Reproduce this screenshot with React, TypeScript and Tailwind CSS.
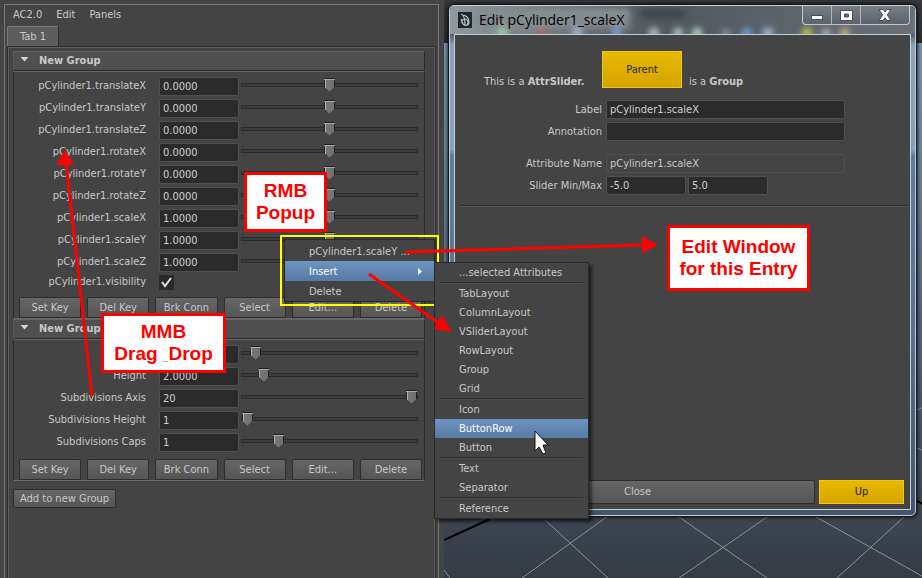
import { useState } from "react";
import clsx from "clsx";

type Attr = { name: string; value: string; slider: number };

const TRANSFORM_ATTRS: Attr[] = [
  { name: "pCylinder1.translateX", value: "0.0000", slider: 50 },
  { name: "pCylinder1.translateY", value: "0.0000", slider: 50 },
  { name: "pCylinder1.translateZ", value: "0.0000", slider: 50 },
  { name: "pCylinder1.rotateX", value: "0.0000", slider: 50 },
  { name: "pCylinder1.rotateY", value: "0.0000", slider: 50 },
  { name: "pCylinder1.rotateZ", value: "0.0000", slider: 50 },
  { name: "pCylinder1.scaleX", value: "1.0000", slider: 50 },
  { name: "pCylinder1.scaleY", value: "1.0000", slider: 50 },
  { name: "pCylinder1.scaleZ", value: "1.0000", slider: 50 },
];

const SHAPE_ATTRS: Attr[] = [
  { name: "", value: "", slider: 5 },
  { name: "Height", value: "2.0000", slider: 10 },
  { name: "Subdivisions Axis", value: "20", slider: 100 },
  { name: "Subdivisions Height", value: "1", slider: 0 },
  { name: "Subdivisions Caps", value: "1", slider: 19 },
];

const ROW_BUTTONS = ["Set Key", "Del Key", "Brk Conn", "Select", "Edit...", "Delete"];

const INSERT_MENU = [
  ["...selected Attributes"],
  ["TabLayout", "ColumnLayout", "VSliderLayout", "RowLayout", "Group", "Grid"],
  ["Icon", "ButtonRow", "Button"],
  ["Text", "Separator"],
  ["Reference"],
];

const FIELD =
  "h-[19px] rounded-xs border border-[#505050] bg-[#2b2b2b] px-[3px] text-[11px] text-[#d0d0d0] outline-none";
const BUTTON =
  "rounded-t-xs border border-[#2e2e2e] bg-linear-to-b from-[#666] to-[#555] text-center text-[#c8c8c8]";
const YELLOW_BUTTON =
  "border border-[#f3c70c] bg-linear-to-b from-[#e8b800] to-[#d4a500] text-[#222]";
const MENU_ITEM = "w-full pt-px pl-6 text-left";

function AttrSlider({ attr }: { attr: Attr }) {
  const [value, setValue] = useState(attr.value);
  const [slider, setSlider] = useState(attr.slider);
  const id = `attr-${attr.name}`;
  return (
    <div className="flex h-[22px] items-center">
      <label htmlFor={id} className="w-[132px] text-right">
        {attr.name}
      </label>
      <input
        id={id}
        value={value}
        onChange={(e) => setValue(e.target.value)}
        className={clsx(FIELD, "ml-[13px] w-20")}
      />
      <input
        type="range"
        aria-label={attr.name}
        value={slider}
        onChange={(e) => setSlider(Number(e.target.value))}
        className="mr-[6px] mb-[3px] ml-[2px] h-4 min-w-0 flex-1 appearance-none bg-transparent [&::-webkit-slider-runnable-track]:h-1 [&::-webkit-slider-runnable-track]:border [&::-webkit-slider-runnable-track]:border-[#2a2a2a] [&::-webkit-slider-runnable-track]:bg-[#3c3c3c] [&::-webkit-slider-thumb]:-mt-[6px] [&::-webkit-slider-thumb]:h-[14px] [&::-webkit-slider-thumb]:w-[11px] [&::-webkit-slider-thumb]:appearance-none [&::-webkit-slider-thumb]:bg-[linear-gradient(#222_1px,#aaa_1px,#aaa_2px,transparent_2px),linear-gradient(90deg,#222_1px,#b0b0b0_1px,#b0b0b0_2px,#777_2px,#707070_10px,#222_10px)] [&::-webkit-slider-thumb]:[clip-path:polygon(0_0,100%_0,100%_65%,50%_100%,0_65%)]"
      />
    </div>
  );
}

function Group({ attrs, visibility }: { attrs: Attr[]; visibility?: boolean }) {
  const [open, setOpen] = useState(true);
  return (
    <section>
      <h2>
        <button
          type="button"
          onClick={() => setOpen(!open)}
          className="flex h-5 w-full items-center border border-t-[#646464] border-r-[#2a2a2a] border-b-[#2a2a2a] border-l-[#5a5a5a] bg-[#4f4f4f] pl-[6px] font-bold"
        >
          <svg width="9" height="5" viewBox="0 0 9 5" className={clsx("mb-[3px]", !open && "-rotate-90")}>
            <path d="M.5 0h8L4.500 4.500z" fill="#d4d4d4" />
          </svg>
          <span className="ml-[10px]">New Group</span>
        </button>
      </h2>
      {open && (
        <div className="border border-t-[#666] border-r-[#2a2a2a] border-b-[#6a6a6a] border-l-[#2a2a2a] pt-[3px]">
          {attrs.map((a) => (
            <AttrSlider key={a.name} attr={a} />
          ))}
          {visibility && (
            <div className="flex h-[18px] items-center">
              <label htmlFor="visibility" className="w-[132px] text-right">
                pCylinder1.visibility
              </label>
              <span className="relative ml-[13px] grid size-[15px] place-items-center bg-[#2b2b2b]">
                <input id="visibility" type="checkbox" defaultChecked className="peer absolute inset-0 appearance-none" />
                <svg width="11" height="11" viewBox="0 0 11 11" className="pointer-events-none invisible peer-checked:visible">
                  <path d="M1 5l3 4 6-8" fill="none" stroke="#e4e4e4" strokeWidth="2" />
                </svg>
              </span>
            </div>
          )}
          <div className="mt-[6px] mr-[2px] ml-[5px] grid grid-cols-6 gap-[6px]">
            {ROW_BUTTONS.map((b) => (
              <button key={b} type="button" className={clsx(BUTTON, "h-[21px]")}>
                {b}
              </button>
            ))}
          </div>
        </div>
      )}
    </section>
  );
}

function Sidebar() {
  return (
    <aside className="w-[444px] shrink-0 pt-1 pr-[5px] pl-1">
      <div className="flex h-full flex-col border border-b-0 border-[#777]">
        <nav className="flex h-[21px] items-center gap-[14px] pb-[2px] pl-2">
          <button type="button">AC2.0</button>
          <button type="button">Edit</button>
          <button type="button">Panels</button>
        </nav>
        <div role="tablist" className="flex h-5 pl-[2px]">
          <button
            type="button"
            role="tab"
            aria-selected="true"
            className="w-[52px] rounded-t-xs border border-b-0 border-t-[#777] border-r-[#2a2a2a] border-l-[#777] bg-[#5d5d5d]"
          >
            Tab 1
          </button>
        </div>
        <div className="mx-[2px] flex-1 border border-b-0 border-[#2e2e2e]">
          <div className="h-full border border-b-0 border-[#5e5e5e] pt-[3px] pr-[9px] pl-1">
            <Group attrs={TRANSFORM_ATTRS} visibility />
            <Group attrs={SHAPE_ATTRS} />
            <button type="button" className={clsx(BUTTON, "mt-2 h-[19px] rounded-b-xs px-[6px]")}>
              Add to new Group
            </button>
          </div>
        </div>
      </div>
    </aside>
  );
}

function WindowIcon() {
  return (
    <svg width="14" height="16" viewBox="0 0 14 16" aria-hidden="true">
      <rect width="14" height="16" fill="#1d272d" />
      <path
        d="M3 2c3 1 4 6 4 11M4 3c4 0 7 3 7 7 0 4-4 4-6 2S4 7 7 7s4 4 2 6M3 7l2 5"
        fill="none"
        stroke="#b5c0c4"
        strokeWidth="1.200"
      />
    </svg>
  );
}

function EditDialog() {
  return (
    <section
      role="dialog"
      aria-label="Edit pCylinder1_scaleX"
      className="absolute top-1 right-[5px] left-1 flex h-[513px] flex-col overflow-hidden rounded-md border border-[#15191d] bg-[linear-gradient(#5d656b_0,#50565b_28px,#8da1ba_40px,#89a0bc_145px,#617c9c_150px,#5c738f_300px,#44566a_100%)] shadow-[0_0_4px_#000]"
    >
      <div className="flex flex-1 flex-col rounded-[5px] border border-[#c3d0d8] px-1 pb-[5px]">
        <header className="relative -mx-1 flex h-[28px] items-start overflow-hidden rounded-t-[4px] bg-linear-to-r from-[#90999e] via-[#50575d] via-45% to-[#697078]">
          <svg className="absolute inset-0 size-full" aria-hidden="true">
            <defs>
              <filter id="soft">
                <feGaussianBlur stdDeviation="3" />
              </filter>
            </defs>
            <g filter="url(#soft)">
              <rect x="25" y="2" width="155" height="20" fill="#858c90" />
              <rect x="190" y="4" width="45" height="8" fill="#3e454b" />
              <circle cx="52" cy="27" r="5" fill="#9ed0a6" />
              <circle cx="92" cy="27" r="5" fill="#b06268" />
              <circle cx="127" cy="27" r="5" fill="#a9bcd2" />
              <circle cx="167" cy="27" r="5" fill="#77a2dc" />
              <circle cx="204" cy="27" r="5" fill="#b9cfd4" />
              <circle cx="228" cy="27" r="5" fill="#aad2ce" />
              <circle cx="247" cy="27" r="5" fill="#bfe0d2" />
              <circle cx="276" cy="27" r="4" fill="#9299a4" />
              <circle cx="297" cy="27" r="5" fill="#6da4e4" />
              <circle cx="318" cy="27" r="5" fill="#a9c5e6" />
              <circle cx="357" cy="27" r="5" fill="#c6cf4c" />
              <circle cx="376" cy="27" r="4" fill="#b3c1d0" />
              <circle cx="395" cy="27" r="5" fill="#c5b982" />
            </g>
          </svg>
          <div className="relative flex flex-1 items-center gap-[7px] pt-1 pl-2">
            <WindowIcon />
            <h1 className="font-['Open_Sans',sans-serif] text-[14px] leading-5 text-black">Edit pCylinder1_scaleX</h1>
          </div>
          <div className="relative mr-[5px] flex h-[19px] overflow-hidden rounded-b-sm border border-t-0 border-[#c0c8cc] bg-linear-to-b from-[#777e84] to-[#5c646b]">
            <button type="button" aria-label="Minimize" className="grid w-[29px] place-items-center border-r border-[#b0b8bc] pt-1">
              <svg width="12" height="5" viewBox="0 0 12 5">
                <rect x="0.500" y="0.500" width="11" height="4" fill="#fff" stroke="#4a4f55" />
              </svg>
            </button>
            <button type="button" aria-label="Maximize" className="grid w-[29px] place-items-center border-r border-[#b0b8bc]">
              <svg width="13" height="11" viewBox="0 0 13 11">
                <path d="M.5.5h12v10H.5zM4.500 4v3h4V4z" fill="#fff" fillRule="evenodd" stroke="#4a4f55" />
              </svg>
            </button>
            <button type="button" aria-label="Close window" className="grid w-[48px] place-items-center">
              <svg width="14" height="12" viewBox="0 0 14 12">
                <path d="M1 .5h4l2 2.500L9 .5h4L9.300 6l3.700 5.500H9L7 8.800 5 11.500H1L4.700 6z" fill="#fff" stroke="#4a4f55" />
              </svg>
            </button>
          </div>
        </header>
        <div className="flex flex-1 flex-col border border-[#c3d0d8] bg-[#444] px-[5px] pt-4 pb-[5px]">
          <div className="flex items-start pl-6">
            <p className="mt-[23px] w-[118px]">
              This is a <b>AttrSlider.</b>
            </p>
            <button type="button" className={clsx(YELLOW_BUTTON, "h-[37px] w-20")}>
              Parent
            </button>
            <p className="mt-[23px] pl-[7px]">
              is a <b>Group</b>
            </p>
          </div>
          <form className="mt-[10px] grid grid-cols-[142px_239px] items-center gap-x-1 gap-y-[3px]">
            <label htmlFor="label" className="text-right">Label</label>
            <input id="label" defaultValue="pCylinder1.scaleX" className={FIELD} />
            <label htmlFor="annotation" className="text-right">Annotation</label>
            <input id="annotation" className={FIELD} />
            <label htmlFor="attribute" className="mt-[10px] text-right">Attribute Name</label>
            <input
              id="attribute"
              readOnly
              value="pCylinder1.scaleX"
              className="mt-[10px] h-[19px] rounded-xs border border-[#505050] px-[3px] text-[#c8c8c8] outline-none"
            />
            <label htmlFor="min" className="text-right">Slider Min/Max</label>
            <div className="flex gap-[2px]">
              <input id="min" defaultValue="-5.0" className={clsx(FIELD, "w-20")} />
              <input aria-label="Slider Max" defaultValue="5.0" className={clsx(FIELD, "w-20")} />
            </div>
          </form>
          <hr className="mt-[10px] -mr-1 border-t-[#2c2c2c] border-b border-b-[#585858]" />
          <div className="mt-auto flex gap-1 pr-px">
            <button type="button" className={clsx(BUTTON, "h-6 flex-1 rounded-b-xs")}>
              Close
            </button>
            <button type="button" className={clsx(YELLOW_BUTTON, "h-6 w-[85px]")}>
              Up
            </button>
          </div>
        </div>
      </div>
    </section>
  );
}

function Viewport() {
  return (
    <div className="relative flex-1 bg-[linear-gradient(#383838_0,#2c2c2c_43px,#7f93ad_43px,#6d829c_170px,#414c59_480px,#343b44_100%)]">
      <svg className="absolute inset-0 size-full" aria-hidden="true">
        <g fill="none" stroke="#8b9197" strokeWidth="1">
          <path d="M101 520L164 578M164 516L78 578M0 570l6 8M235 517L323 578M323 517L235 578M372 517L478 576M460 517L393 578M473 410l5-2M473 448l5 2" />
          <path d="M0 540l46-21M473 501l6 3" stroke="#000" strokeWidth="2" />
        </g>
      </svg>
      <EditDialog />
    </div>
  );
}

function ContextMenu() {
  return (
    <div className="absolute top-[235px] left-[280px] w-[159px] border-2 border-[#ff0] p-[2px]">
      <div role="menu" className="border border-[#2a2a2a] bg-[#444] pt-px">
        <button type="button" role="menuitem" className={clsx(MENU_ITEM, "block h-5")}>
          pCylinder1.scaleY ...
        </button>
        <button
          type="button"
          role="menuitem"
          className={clsx(
            MENU_ITEM,
            "flex h-5 items-center justify-between bg-linear-to-b from-[#6f94bf] to-[#557aa5] pr-3 text-white",
          )}
        >
          Insert
          <svg width="4" height="7" viewBox="0 0 4 7">
            <path d="M0 0l4 3.500L0 7z" fill="#fff" />
          </svg>
        </button>
        <button type="button" role="menuitem" className={clsx(MENU_ITEM, "block h-5")}>
          Delete
        </button>
      </div>
    </div>
  );
}

function InsertMenu() {
  return (
    <div
      role="menu"
      className="absolute top-[262px] left-[434px] w-[155px] border border-[#2a2a2a] bg-[#444] shadow-[3px_3px_3px_#0008]"
    >
      {INSERT_MENU.map((items, i) => (
        <div key={items[0]}>
          {i > 0 && <hr className="mx-[5px] border-t-[#303030] border-b border-b-[#4e4e4e]" />}
          {items.map((item) => (
            <button
              key={item}
              type="button"
              role="menuitem"
              className={clsx(
                MENU_ITEM,
                "block h-[19px]",
                item === "ButtonRow" && "bg-linear-to-b from-[#6f94bf] to-[#557aa5] text-white",
              )}
            >
              {item}
            </button>
          ))}
        </div>
      ))}
    </div>
  );
}

const CALLOUT =
  "absolute border-[3px] border-[#f00] bg-white text-center font-['Liberation_Sans',Arial,sans-serif] text-[19px] leading-[22px] font-bold text-[#f00]";

function Annotations() {
  return (
    <>
      <svg className="pointer-events-none absolute inset-0 size-full" aria-hidden="true">
        <g fill="none" stroke="#f00" strokeWidth="3">
          <path d="M92 396L66 162" />
          <path d="M405 252L642 245" />
          <path d="M369 274L440 324" />
        </g>
        <path d="M65 150l9 15H56zM642 236l16 9-16 8zM452 332l-10-17-8 14z" fill="#f00" />
        <path
          d="M535 431v20l4-4 4 7 3-1-3-8h5z"
          fill="#fff"
          stroke="#111"
          strokeWidth="1"
        />
      </svg>
      <div className={clsx(CALLOUT, "top-[172px] left-[244px] w-[83px] py-[5px]")}>
        RMB
        <br />
        Popup
      </div>
      <div className={clsx(CALLOUT, "top-[313px] left-[101px] w-[125px] py-[5px]")}>
        MMB
        <br />
        Drag <span className="text-[10px] leading-none">_</span>Drop
      </div>
      <div className={clsx(CALLOUT, "top-[225px] left-[667px] w-[143px] py-[8px]")}>
        Edit Window
        <br />
        for this Entry
      </div>
    </>
  );
}

export default function App() {
  return (
    <main className="relative flex min-h-screen overflow-hidden bg-[#444] font-['DejaVu_Sans_Condensed','DejaVu_Sans',sans-serif] text-[11px] leading-4 text-[#c8c8c8]">
      <Sidebar />
      <Viewport />
      <ContextMenu />
      <InsertMenu />
      <Annotations />
    </main>
  );
}
